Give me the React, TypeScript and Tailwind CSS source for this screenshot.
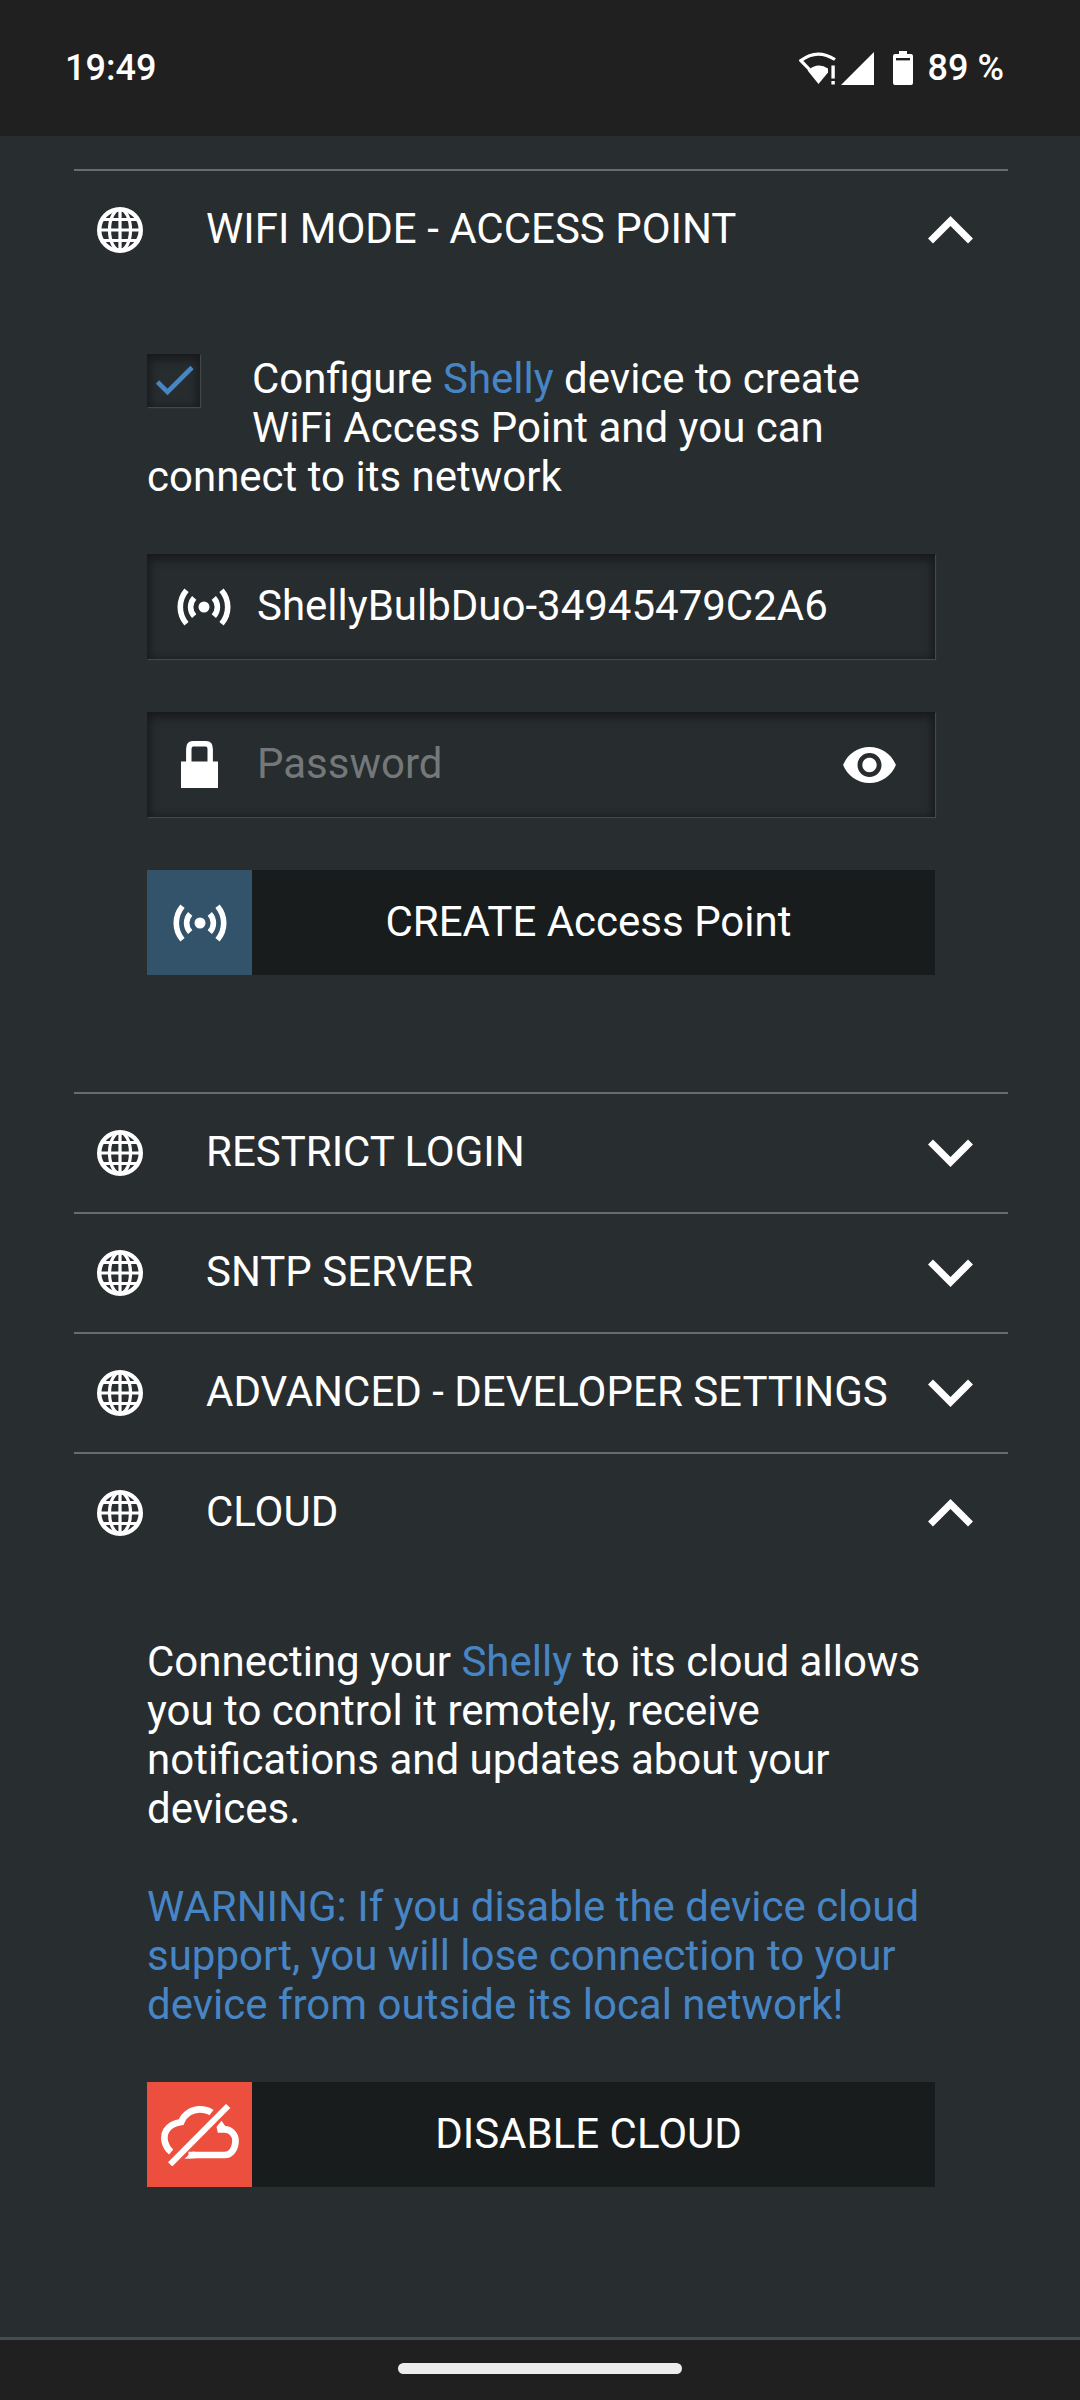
import { useState, type ReactNode } from 'react';

function GlobeIcon() {
  return (
    <svg className="size-[46px] shrink-0" viewBox="0 0 46 46" fill="none" stroke="white" aria-hidden="true">
      <circle cx="23" cy="23" r="20.8" strokeWidth="4.4" />
      <ellipse cx="23" cy="23" rx="10.5" ry="20.5" strokeWidth="3.2" />
      <path d="M23 2v42M2 23h42M6 12.5h34M6 33.5h34" strokeWidth="3.2" />
    </svg>
  );
}

function ChevronIcon({ open }: { open: boolean }) {
  return (
    <svg className="h-7 w-[45px] shrink-0" viewBox="0 0 45 28" fill="none" stroke="white" strokeWidth="7" aria-hidden="true">
      <path d={open ? 'M2.5 25L22.5 5L42.5 25' : 'M2.5 3L22.5 23L42.5 3'} />
    </svg>
  );
}

function BroadcastIcon() {
  return (
    <svg className="h-[38px] w-[54px]" viewBox="0 0 54 38" fill="none" stroke="white" strokeWidth="5.6" aria-hidden="true">
      <path d="M9.5 2.2C1.2 12 1.2 26 9.5 35.8M44.5 2.2C52.8 12 52.8 26 44.5 35.8" />
      <path d="M17.2 9.8C12.4 15.3 12.4 22.7 17.2 28.2M36.8 9.8C41.6 15.3 41.6 22.7 36.8 28.2" />
      <circle cx="27" cy="19" r="5.5" fill="white" stroke="none" />
    </svg>
  );
}

function LockIcon() {
  return (
    <svg className="h-[47px] w-[37px]" viewBox="0 0 37 47" aria-hidden="true">
      <path d="M0 20.5H37V47H0Z" fill="white" />
      <path d="M7.8 22V8Q7.8 2.8 12 2.8H25Q29.2 2.8 29.2 8V22" fill="none" stroke="white" strokeWidth="5.4" />
    </svg>
  );
}

function EyeIcon() {
  return (
    <svg className="h-9 w-[53px]" viewBox="1 4.5 22 15" fill="white" aria-hidden="true">
      <path d="M12 4.5C7 4.5 2.73 7.61 1 12c1.73 4.39 6 7.5 11 7.5s9.27-3.11 11-7.5c-1.73-4.39-6-7.5-11-7.5zM12 17c-2.76 0-5-2.24-5-5s2.24-5 5-5 5 2.24 5 5-2.24 5-5 5zm0-8c-1.66 0-3 1.34-3 3s1.34 3 3 3 3-1.34 3-3-1.34-3-3-3z" />
    </svg>
  );
}

function CloudOffIcon() {
  return (
    <svg className="h-[62px] w-[78px]" viewBox="94 133 233 186" fill="none" stroke="white" strokeWidth="20" aria-hidden="true">
      <path d="M124 277C105 262 98 233 109 213C118 197 135 190 154 187C164 162 188 149 209 149C224 149 236 152 245 159" />
      <path d="M264 209H284C303 209 317 225 317 243C317 267 304 286 285 286H176" />
      <path d="M260 202L275 183L287 200L300 204L264 218ZM164 297L187 276H196V296Z" fill="white" stroke="none" />
      <path d="M121 314L295 139" strokeWidth="18" />
    </svg>
  );
}

function StatusBar() {
  return (
    <header className="flex h-[136px] items-center justify-between bg-[#202020] pr-[76px] pl-[65px] text-[36px] leading-[42px] font-medium">
      <span>19:49</span>
      <div className="flex items-center">
        <svg className="h-[34px] w-[38px]" viewBox="0 0 38 34" aria-label="Wi-Fi, limited" role="img">
          <path d="M19.5 33L8.6 19.6Q19 10.6 29 17.6V21.4Z" fill="white" />
          <path d="M10.5 18.5L1.9 9.6Q18 -3 36 8.5" fill="none" stroke="white" strokeWidth="3.2" />
          <path d="M32.4 14.5h3.4v13h-3.4zM32.4 30h3.4v3.4h-3.4z" fill="white" />
        </svg>
        <svg className="ml-1 h-[34px] w-[33px]" viewBox="0 0 33 34" aria-label="Mobile signal" role="img">
          <path d="M0 34L33 1V34Z" fill="white" />
        </svg>
        <svg className="ml-[19px] h-[34px] w-5" viewBox="0 0 20 34" aria-label="Battery" role="img">
          <path d="M6 0h8v3h4q2 0 2 2v27q0 2-2 2H2q-2 0-2-2V5q0-2 2-2h4z" fill="white" />
          <path d="M3 7h14v2.4H3z" fill="#202020" />
        </svg>
        <span className="ml-[15px]">89 %</span>
      </div>
    </header>
  );
}

type SectionProps = { title: string; initiallyOpen?: boolean; children?: ReactNode };

function Section({ title, initiallyOpen = false, children }: SectionProps) {
  const [open, setOpen] = useState(initiallyOpen);
  return (
    <section className="border-t-2 border-[#676c6e]">
      <h2>
        <button
          type="button"
          aria-expanded={open}
          onClick={() => setOpen(!open)}
          className="flex h-[118px] w-full items-center pr-[35px] pl-[23px] text-left"
        >
          <GlobeIcon />
          <span className="ml-[63px] flex-1 pb-1 whitespace-nowrap">{title}</span>
          <ChevronIcon open={open} />
        </button>
      </h2>
      {open && children && (
        <div className="flex flex-col gap-[53px] px-[73px] pt-[65px] pb-[117px]">{children}</div>
      )}
    </section>
  );
}

function Field({ icon, children }: { icon: ReactNode; children: ReactNode }) {
  return (
    <div className="flex h-[105px] items-center bg-[#272c2f] pr-[39px] shadow-[inset_0_3px_10px_2px_rgba(18,18,18,0.75),1px_1px_1px_#42484b]">
      <span className="flex w-[110px] shrink-0 justify-center pl-1">{icon}</span>
      {children}
    </div>
  );
}

function ActionButton({ tile, children }: { tile: ReactNode; children: ReactNode }) {
  return (
    <button type="button" className="flex h-[105px] w-full items-center bg-[#181c1d]">
      {tile}
      <span className="flex-1 pr-[10px] pb-[2px]">{children}</span>
    </button>
  );
}

function Brand() {
  return <span className="text-[#4785c5]">Shelly</span>;
}

export default function App() {
  const [enabled, setEnabled] = useState(true);
  const [ssid, setSsid] = useState('ShellyBulbDuo-34945479C2A6');
  const [password, setPassword] = useState('');
  const [visible, setVisible] = useState(false);

  return (
    <div className="flex min-h-screen flex-col bg-[#282d30] font-['Roboto',sans-serif] text-[42px] leading-[49px] text-white">
      <StatusBar />
      <main className="flex-1 border-b-[3px] border-[#454d50] pt-[33px] pr-[72px] pl-[74px]">
        <Section title="WIFI MODE - ACCESS POINT" initiallyOpen>
          <div>
            <span className="relative float-left mr-[52px] block size-[53px]">
              <input
                id="ap-enabled"
                type="checkbox"
                checked={enabled}
                onChange={(e) => setEnabled(e.target.checked)}
                className="block size-full appearance-none bg-[#272c2f] shadow-[inset_0_3px_10px_2px_rgba(18,18,18,0.75),1px_1px_1px_#42484b]"
              />
              {enabled && (
                <svg className="pointer-events-none absolute inset-0" viewBox="0 0 53 53" fill="none" stroke="#4785c5" strokeWidth="4.6" aria-hidden="true">
                  <path d="M10.5 28L20.5 38L45 13.5" />
                </svg>
              )}
            </span>
            <label htmlFor="ap-enabled">
              Configure <Brand /> device to create WiFi Access Point and you can connect to its network
            </label>
          </div>
          <Field icon={<BroadcastIcon />}>
            <input
              type="text"
              aria-label="Network name"
              value={ssid}
              onChange={(e) => setSsid(e.target.value)}
              className="h-full min-w-0 flex-1 bg-transparent pb-[2px] outline-none"
            />
          </Field>
          <Field icon={<span className="pr-[10px]"><LockIcon /></span>}>
            <input
              type={visible ? 'text' : 'password'}
              aria-label="Password"
              placeholder="Password"
              value={password}
              onChange={(e) => setPassword(e.target.value)}
              className="h-full min-w-0 flex-1 bg-transparent pb-[2px] outline-none placeholder:text-[#74787a]"
            />
            <button type="button" aria-label="Show password" onClick={() => setVisible(!visible)}>
              <EyeIcon />
            </button>
          </Field>
          <ActionButton
            tile={<span className="flex size-[105px] items-center justify-center bg-[#33536b]"><BroadcastIcon /></span>}
          >
            CREATE Access Point
          </ActionButton>
        </Section>
        <Section title="RESTRICT LOGIN" />
        <Section title="SNTP SERVER" />
        <Section title="ADVANCED - DEVELOPER SETTINGS" />
        <Section title="CLOUD" initiallyOpen>
          <div className="flex flex-col gap-[49px]">
            <p>
              Connecting your <Brand /> to its cloud allows you to control it remotely, receive notifications and
              updates about your devices.
            </p>
            <p className="text-[#4785c5]">
              WARNING: If you disable the device cloud support, you will lose connection to your device from outside
              its local network!
            </p>
          </div>
          <ActionButton
            tile={<span className="flex size-[105px] items-center justify-center bg-[#ec4f3d]"><CloudOffIcon /></span>}
          >
            DISABLE CLOUD
          </ActionButton>
        </Section>
      </main>
      <footer className="flex h-[60px] items-start justify-center bg-[#202020] pt-[23px]">
        <div className="h-[11px] w-[284px] rounded-full bg-[#ececec]" />
      </footer>
    </div>
  );
}
